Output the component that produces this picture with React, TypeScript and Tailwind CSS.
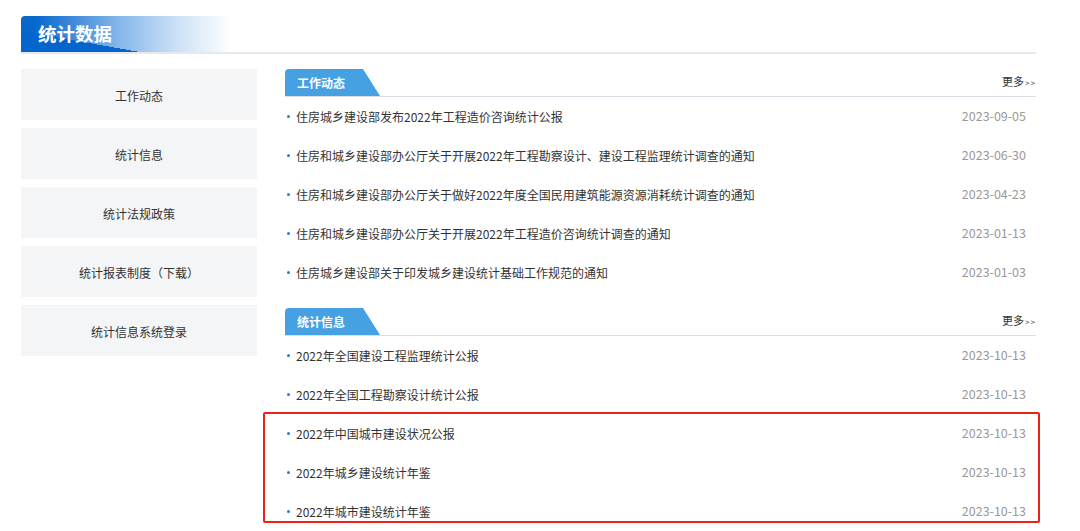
const news = [
  { title: "住房城乡建设部发布2022年工程造价咨询统计公报", date: "2023-09-05" },
  { title: "住房和城乡建设部办公厅关于开展2022年工程勘察设计、建设工程监理统计调查的通知", date: "2023-06-30" },
  { title: "住房和城乡建设部办公厅关于做好2022年度全国民用建筑能源资源消耗统计调查的通知", date: "2023-04-23" },
  { title: "住房和城乡建设部办公厅关于开展2022年工程造价咨询统计调查的通知", date: "2023-01-13" },
  { title: "住房城乡建设部关于印发城乡建设统计基础工作规范的通知", date: "2023-01-03" },
];

const info = [
  { title: "2022年全国建设工程监理统计公报", date: "2023-10-13" },
  { title: "2022年全国工程勘察设计统计公报", date: "2023-10-13" },
  { title: "2022年中国城市建设状况公报", date: "2023-10-13" },
  { title: "2022年城乡建设统计年鉴", date: "2023-10-13" },
  { title: "2022年城市建设统计年鉴", date: "2023-10-13" },
];

const menu = ["工作动态", "统计信息", "统计法规政策", "统计报表制度（下载）", "统计信息系统登录"];

function Row({ title, date }: { title: string; date: string }) {
  return (
    <div className="flex h-[39px] items-center justify-between pl-[2px] pr-[10px]">
      <div className="flex items-center text-[12px] text-[#333]">
        <span className="mr-[6px] h-[3px] w-[3px] rounded-full bg-[#2b78d6]" />
        {title}
      </div>
      <span className="text-[12.5px] text-[#999]">{date}</span>
    </div>
  );
}

function SectionHead({ title }: { title: string }) {
  return (
    <div className="flex h-[28px] items-end justify-between border-b border-[#dbe0e8]">
      <div className="flex h-[27px] w-[95px] items-center rounded-tl-[4px] bg-[#45a1e2] pl-[12px] text-[12px] font-bold text-white [clip-path:polygon(0_0,78px_0,95px_100%,0_100%)]">
        {title}
      </div>
      <a className="mb-[7px] text-[11px] text-[#333]">
        更多<span className="ml-[1px] text-[8px] tracking-[1px]">&gt;&gt;</span>
      </a>
    </div>
  );
}

export default function App() {
  return (
    <div className="h-[531px] w-[1080px] overflow-hidden bg-white font-['Noto_Sans_CJK_SC','Noto_Sans',sans-serif]">
      <div className="ml-[21px] w-[1015px] pt-[16px]">
        <div className="border-b-2 border-[#e7e9ef]">
          <div className="flex h-[36px] w-[220px] items-center rounded-tl-[4px] bg-[linear-gradient(190deg,transparent_72%,#0466cc_72%),linear-gradient(90deg,#0768cc_6%,#3a86d8_22%,#86b8ea_45%,#cfe2f6_72%,#ffffff_96%)] pl-[17px] text-[18.5px] font-bold text-white">
            统计数据
          </div>
        </div>

        <div className="mt-[15px] flex">
          <div className="flex w-[236px] flex-col gap-[8px]">
            {menu.map((m) => (
              <div
                key={m}
                className="flex h-[51px] items-center justify-center bg-[#f4f5f7] pt-[2px] text-[12px] text-[#333]"
              >
                {m}
              </div>
            ))}
          </div>

          <div className="ml-[28px] flex-1">
            <SectionHead title="工作动态" />
            {news.map((n) => (
              <Row key={n.title} {...n} />
            ))}

            <div className="mt-[16px]">
              <SectionHead title="统计信息" />
              {info.slice(0, 2).map((n) => (
                <Row key={n.title} {...n} />
              ))}
              <div className="relative">
                {info.slice(2).map((n) => (
                  <Row key={n.title} {...n} />
                ))}
                <div className="absolute left-[-22px] right-[-4px] top-[-2px] h-[111px] rounded-[2px] border-2 border-[#f0201c]" />
              </div>
            </div>
          </div>
        </div>
      </div>
    </div>
  );
}
